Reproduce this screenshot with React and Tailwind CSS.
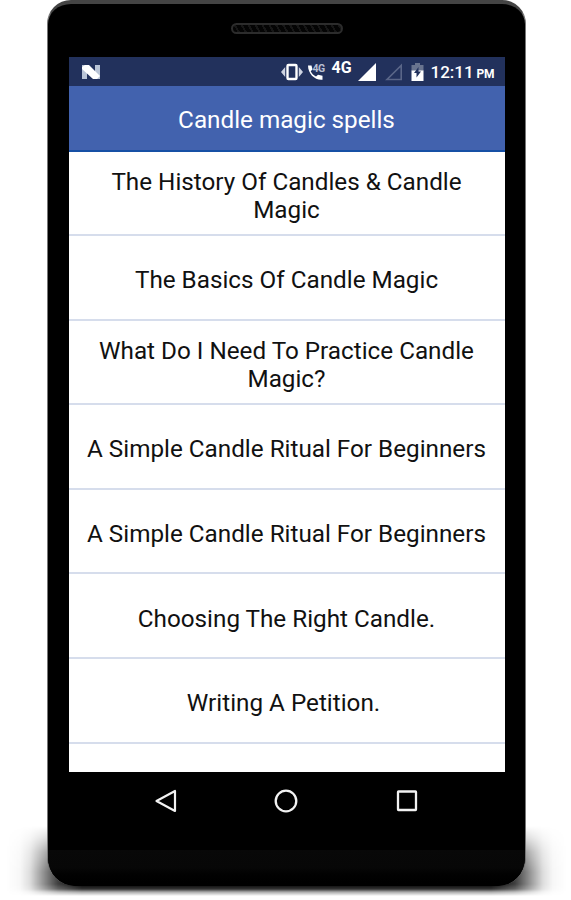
// App.jsx
import React from 'react';

const spells = [
  'The History Of Candles & Candle Magic',
  'The Basics Of Candle Magic',
  'What Do I Need To Practice Candle Magic?',
  'A Simple Candle Ritual For Beginners',
  'A Simple Candle Ritual For Beginners',
  'Choosing The Right Candle.',
  'Writing A Petition.\u00a0',
];

function StatusBar() {
  return (
    <div className="flex h-[28.5px] shrink-0 items-center bg-[#22315c] pl-3 pr-[9px] pt-px text-white">
      {/* Android N logo */}
      <svg className="h-4 w-5" viewBox="0 0 20 16">
        <path d="M1 1h5v14H1zM14 1h5v14h-5z" fill="#b9c4d6" />
        <path d="M1 3 4 1h4l11 11-3 3h-4L1 5z" fill="#fff" />
      </svg>

      <div className="ml-auto flex items-center">
        {/* Vibrate */}
        <svg className="h-[18px] w-[22px]" viewBox="0 0 22 18">
          <rect x="6.500" y="2" width="9" height="14" rx="1" fill="none" stroke="#fff" strokeWidth="2.400" />
          <path d="M4.200 4v10L2.500 12 0 9l2.500-3zM17.800 4v10l1.700-2L22 9l-2.500-3z" fill="#cfd4e2" />
        </svg>
        {/* Volte call */}
        <div className="relative ml-[4px] h-[18px] w-[20px]">
          <svg className="h-[18px] w-[20px]" viewBox="0 0 20 18">
            <path
              d="M1 2.500h3.500l1 4-1.800 1.700c1.300 2.500 3 4.200 5.300 5.300l2-1.800 4.500 1v4C8 17.500 1 11 1 2.500z"
              fill="#fff"
            />
          </svg>
          <span className="absolute left-[6px] top-0 font-['Roboto',sans-serif] text-[10.5px] font-bold leading-[11px] tracking-[-0.5px] text-[#b8bfd2]">
            4G
          </span>
        </div>
        <span className="relative -top-[4px] ml-[5px] w-[21px] text-[16px] font-bold leading-[16px]">4G</span>
        {/* Signal */}
        <svg className="ml-[5px] h-[18px] w-[18px]" viewBox="0 0 18 18">
          <path d="M18 0v18H0z" fill="#fff" />
        </svg>
        <svg className="ml-[9px] h-[18px] w-[18px]" viewBox="0 0 18 18">
          <path d="M16.200 2.500v14H2z" fill="none" stroke="#5a6688" strokeWidth="1.600" />
        </svg>
        {/* Battery */}
        <svg className="ml-[8px] h-[18px] w-[13px]" viewBox="0 0 13 18">
          <path d="M4 0h5v2h3.500v6H.500V2H4z" fill="#69748f" />
          <path d="M.500 7.500h12V18H.500z" fill="#fff" />
          <path d="M7.500 4v4.500H10L5.500 14.500V10H3z" fill="#22315c" />
        </svg>
        <span className="ml-[7px] flex items-baseline whitespace-nowrap font-medium">
          <span className="w-[42px] text-[17px] leading-[24px]">12:11</span>
          <span className="ml-[4px] w-[19px] text-[12px] font-bold tracking-[-0.3px]">PM</span>
        </span>
      </div>
    </div>
  );
}

function NavBar() {
  return (
    <div className="grid grid-cols-[120.5px_120.5px_120.5px] justify-center pr-px pt-[17px]">
      <svg className="mx-auto h-6 w-6" viewBox="0 0 24 24">
        <path d="M21 2v20L2.500 12z" fill="none" stroke="#f2f2f2" strokeWidth="2.200" strokeLinejoin="round" />
      </svg>
      <svg className="mx-auto h-6 w-6" viewBox="0 0 24 24">
        <circle cx="12" cy="12" r="10.300" fill="none" stroke="#f2f2f2" strokeWidth="2.300" />
      </svg>
      <svg className="mx-auto h-6 w-6" viewBox="0 0 24 24">
        <rect x="3" y="2.500" width="18" height="18.500" rx=".5" fill="none" stroke="#f2f2f2" strokeWidth="2.300" />
      </svg>
    </div>
  );
}

function App() {
  return (
    <div className="relative h-[900px] w-[571px] overflow-hidden bg-white pl-[47px] font-['Roboto',sans-serif]">
      {/* Floor shadow */}
      <div className="absolute left-[6px] top-[826px] h-[70px] w-[561px] bg-[linear-gradient(to_right,transparent_0px,#00000008_14px,#00000022_24px,#00000070_38px,#000000c0_52px,#000_76px,#000_485px,#000000c0_509px,#00000070_523px,#00000022_537px,#00000008_547px,transparent_561px)] mask-[linear-gradient(to_bottom,transparent_0px,#0004_12px,#000a_26px,#000_46px,#000_58px,#000c_63px,#0005_66px,transparent_70px)]" />

      {/* Phone body */}
      <div className="relative flex h-[886px] w-[479px] flex-col overflow-hidden rounded-t-[24px] rounded-b-[28px] border-x border-t-4 border-x-[#777] border-t-[#444] bg-black px-[20.5px]">
        <div className="flex h-[53px] shrink-0 justify-center pt-[19px]">
          <div className="h-[11px] w-[112px] rounded-full border-2 border-[#2c2c2c] bg-[repeating-linear-gradient(60deg,#040404_0px,#040404_4px,#161616_4px,#161616_6px)]" />
        </div>

        {/* Screen */}
        <div className="flex h-[715px] w-[436px] shrink-0 flex-col overflow-hidden bg-white">
          <StatusBar />
          <div className="flex h-[66px] shrink-0 items-center justify-center border-b-2 border-[#1650a5] bg-[#4262ae] pt-[5px] text-[24.25px] text-white">
            Candle magic spells
          </div>
          <ul>
            {spells.map((spell, index) => (
              <li
                key={index}
                className="flex h-[84.6px] items-center justify-center border-b-2 border-[#d6ddec] px-[12px] pt-[6px] text-center text-[24.25px] leading-[28.3px] text-[#111]"
              >
                {spell}
              </li>
            ))}
          </ul>
        </div>

        <NavBar />
        <div className="absolute bottom-0 left-0 h-[36px] w-full bg-linear-to-b from-[#080808] via-[#070707] to-black" />
      </div>
    </div>
  );
}

export default App;
